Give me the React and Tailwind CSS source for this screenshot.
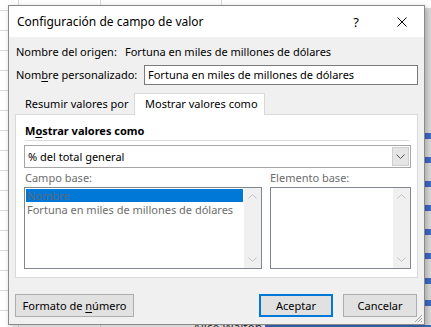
import React from "react";

const U = ({ children }) => <span className="underline underline-offset-[2px]">{children}</span>;

function Chevron({ up, color = "#c2c2c2" }) {
  return (
    <svg width="9" height="5" viewBox="0 0 9 5" className="block">
      <path d={up ? "M0.5 4.5 L4.5 0.5 L8.5 4.5" : "M0.5 0.5 L4.5 4.5 L8.5 0.5"} fill="none" stroke={color} strokeWidth="1" />
    </svg>
  );
}

function ScrollBar() {
  return (
    <div className="w-[17px] h-full bg-[#f0f0f0] flex flex-col justify-between items-center py-[6px]">
      <Chevron up />
      <Chevron />
    </div>
  );
}

export default function App() {
  const blue = [133, 157, 181, 205, 229, 253, 278, 300];
  const hlines = [10, 30, 50, 70, 90, 110, 130, 150, 170, 190, 210, 230, 250, 270, 290, 310];
  return (
    <div className="relative w-[431px] h-[327px] overflow-hidden bg-white font-['Noto_Sans',sans-serif] text-[11px] text-black whitespace-nowrap">
      {/* spreadsheet background */}
      {hlines.map((y) => (
        <div key={y} className="absolute left-0 w-[431px] h-px bg-[#dadada]" style={{ top: y }} />
      ))}
      <div className="absolute top-0 left-[18px] w-px h-[327px] bg-[#dadada]" />
      <div className="absolute top-0 left-[100px] w-px h-[327px] bg-[#dadada]" />
      <div className="absolute top-0 left-[221px] w-px h-[327px] bg-[#dadada]" />
      <div className="absolute top-[8px] left-[425px] w-[6px] h-[319px] bg-[#dcdcdc]" />
      {blue.map((y) => (
        <div key={y} className="absolute left-[425px] w-[6px] h-[6px] bg-[#3b6cc4]" style={{ top: y }} />
      ))}
      <div className="absolute top-[325px] left-[265px] w-[166px] h-[2px] bg-[#3b6cc4]" />
      <div className="absolute top-[321px] left-[193px] leading-[14px] text-[12px] text-[#333]">Alice Walton</div>

      {/* dialog window */}
      <div className="absolute left-[8px] top-[5px] w-[417px] h-[320px] border border-[#8a8a8a] bg-[#f0f0f0] flex flex-col shadow-[2px_2px_6px_rgba(0,0,0,0.25)]">
        {/* title bar */}
        <div className="h-[31px] bg-white flex items-center pl-[8px] shrink-0">
          <span className="text-[12px] leading-[16px]">Configuración de campo de valor</span>
          <span className="ml-auto mr-[38px] text-[13px] leading-[16px]">?</span>
          <svg width="10" height="10" viewBox="0 0 10 10" className="mr-[17px]">
            <path d="M0.5 0.5 L9.5 9.5 M9.5 0.5 L0.5 9.5" stroke="#000" strokeWidth="1" />
          </svg>
        </div>

        {/* body */}
        <div className="flex-1 pl-[6px] flex flex-col relative">
          <div className="mt-[7px] h-[16px] leading-[16px] flex pl-[1px]">
            <span className="w-[109px]">Nombre del origen:</span>
            <span>Fortuna en miles de millones de dólares</span>
          </div>

          <div className="mt-[5px] h-[20px] flex items-center pl-[1px]">
            <span className="w-[128px] leading-[16px]">
              Nom<U>b</U>re personalizado:
            </span>
            <div className="w-[274px] h-[20px] border border-[#7a7a7a] bg-white pl-[3px] leading-[18px]">
              Fortuna en miles de millones de dólares
            </div>
          </div>

          {/* tabs */}
          <div className="mt-[8px] h-[21px] flex items-end relative z-10">
            <div className="w-[118px] h-[19px] pl-[9px] leading-[18px] ml-[1px]">
              Resumir valores por
            </div>
            <div className="w-[131px] h-[22px] border border-b-0 border-[#d9d9d9] bg-white pl-[10px] leading-[20px] -mb-px">
              Mostrar valores como
            </div>
          </div>

          {/* panel */}
          <div className="w-[403px] h-[164px] border border-[#d9d9d9] bg-white pl-[8px] pt-[8px] flex flex-col">
            <div className="pl-[1px] h-[16px] leading-[16px] font-bold">
              M<U>o</U>strar valores como
            </div>
            <div className="ml-[1px] mt-px w-[384px] h-px bg-[#dcdcdc]" />
            <div className="mt-[4px] w-[387px] h-[23px] border border-[#a6a6a6] bg-white flex items-center">
              <span className="pl-[3px] leading-[16px]">% del total general</span>
              <div className="ml-auto mr-px w-[17px] h-[19px] bg-[#e5e5e5] border border-[#cfcfcf] flex items-center justify-center">
                <Chevron color="#555" />
              </div>
            </div>

            <div className="mt-[2px] flex gap-[8px]">
              <div className="flex flex-col">
                <div className="pl-[1px] h-[16px] leading-[16px] text-[#6d6d6d]">Campo base:</div>
                <div className="mt-px w-[238px] h-[82px] border border-[#82868d] bg-white flex">
                  <div className="flex-1 p-px text-[#6d6d6d] leading-[13px]">
                    <div className="h-[13px] bg-[#0078d7] pl-[1px] text-[#5a6b82]">Nombre</div>
                    <div className="h-[13px] pl-[1px] mt-px">Fortuna en miles de millones de dólares</div>
                  </div>
                  <ScrollBar />
                </div>
              </div>
              <div className="flex flex-col">
                <div className="h-[16px] leading-[16px] text-[#6d6d6d]">Elemento base:</div>
                <div className="mt-px w-[141px] h-[82px] border border-[#82868d] bg-white flex">
                  <div className="flex-1" />
                  <ScrollBar />
                </div>
              </div>
            </div>
          </div>

          {/* buttons */}
          <div className="mt-[16px] flex items-center pr-[7px]">
            <button className="w-[119px] h-[23px] border border-[#adadad] bg-[#e1e1e1] leading-[16px]">
              Formato de <U>n</U>úmero
            </button>
            <button className="ml-auto w-[74px] h-[23px] border-2 border-[#0078d7] bg-[#e1e1e1] leading-[16px]">
              Aceptar
            </button>
            <button className="ml-[10px] w-[74px] h-[23px] border border-[#adadad] bg-[#e1e1e1] leading-[16px]">
              Cancelar
            </button>
          </div>

          {/* resize grip */}
          <svg width="9" height="9" viewBox="0 0 9 9" className="absolute right-[1px] bottom-[1px]">
            <path d="M8 1 L1 8 M8 4 L4 8 M8 7 L7 8" stroke="#a0a0a0" strokeWidth="1" />
          </svg>
        </div>
      </div>
    </div>
  );
}
